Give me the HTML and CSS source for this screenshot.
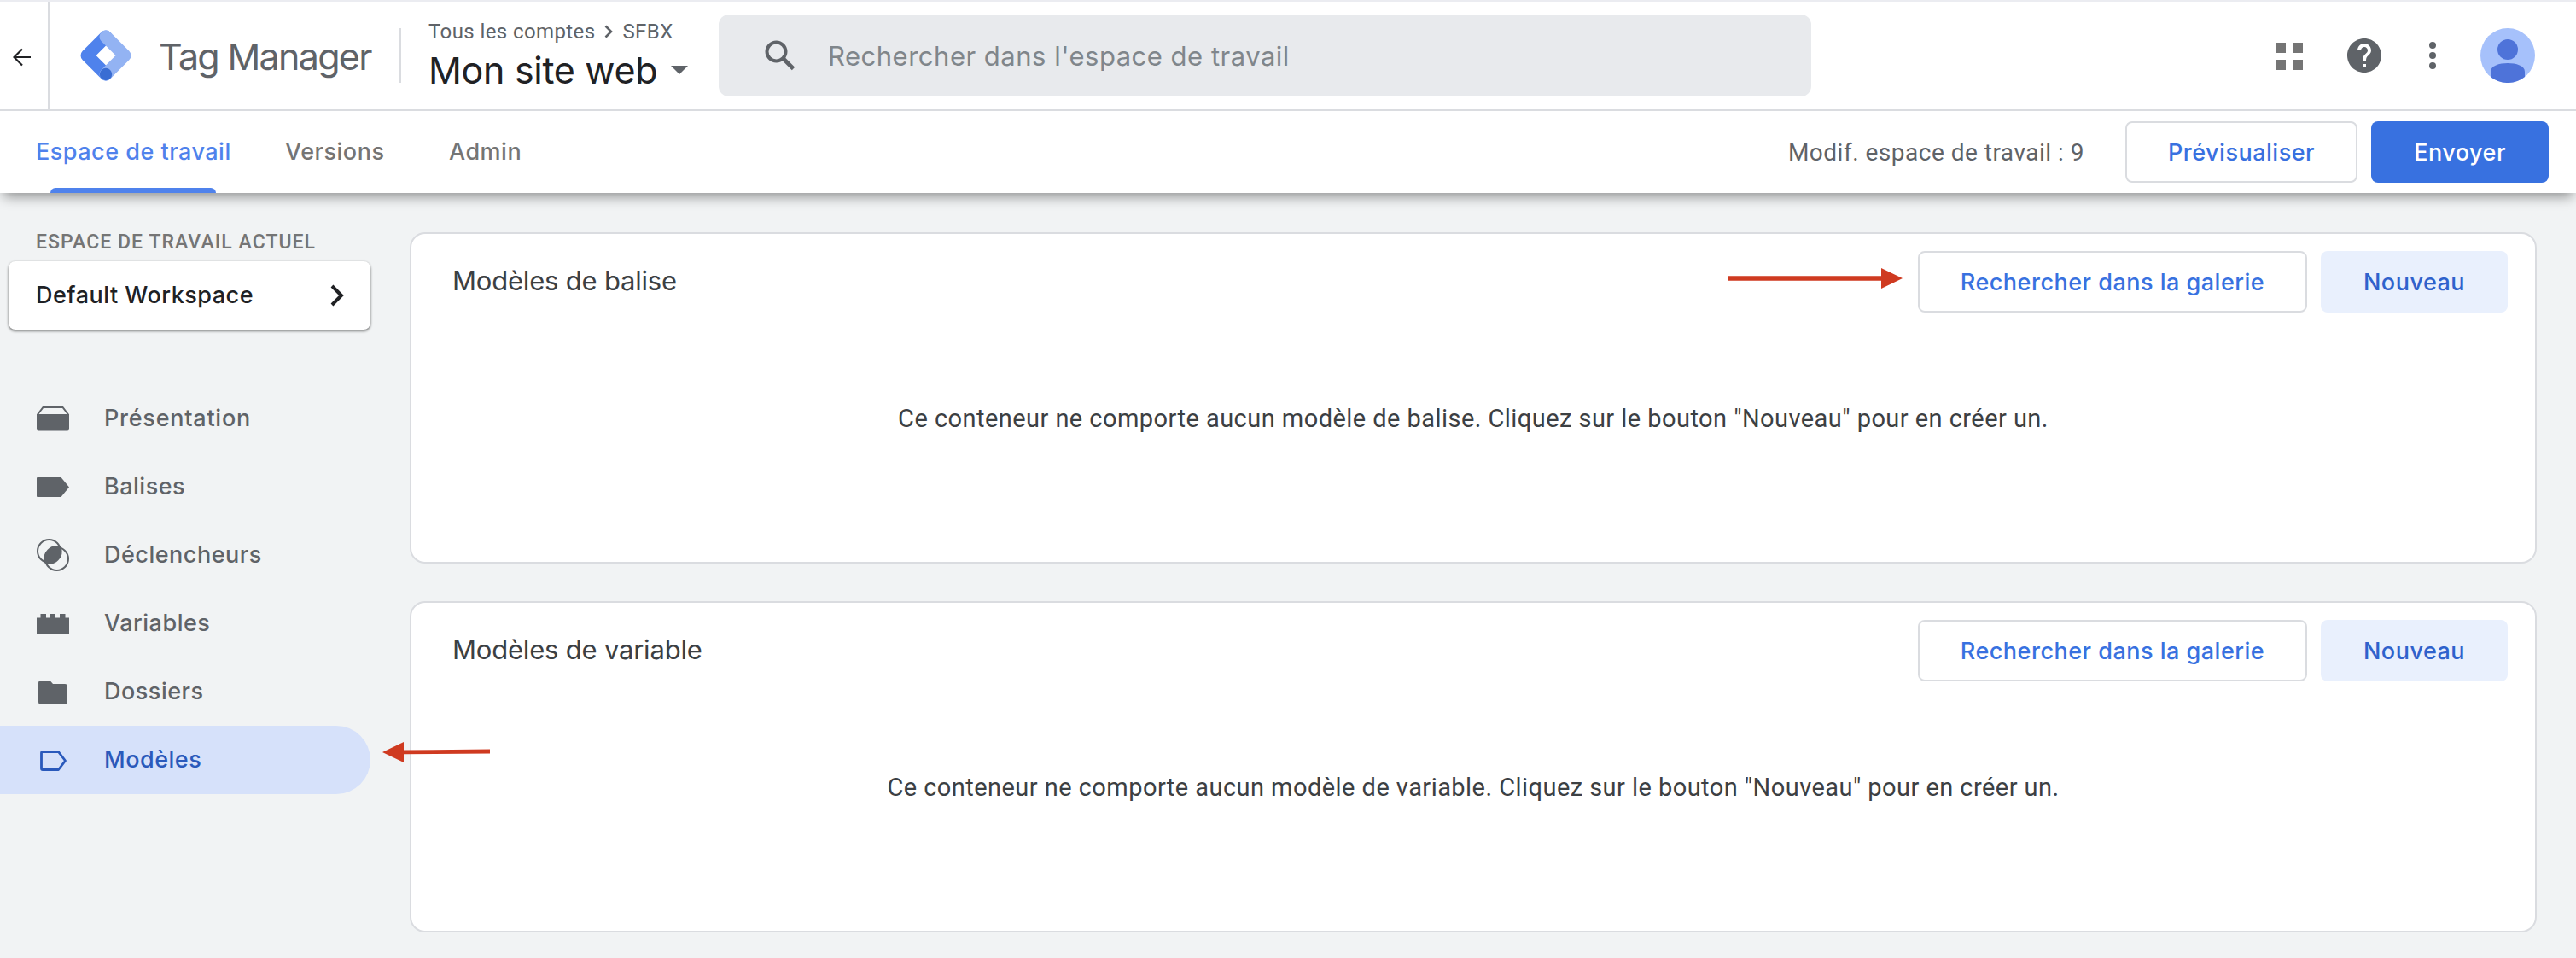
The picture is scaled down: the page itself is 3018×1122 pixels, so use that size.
FILE: index.html
```html
<!DOCTYPE html>
<html lang="fr">
<head>
<meta charset="UTF-8">
<meta name="viewport" content="width=device-width, initial-scale=1.0">
<link rel="stylesheet" href="styles.css">
<title>Tag Manager</title>
</head>
<body>

<header class="topbar">
<button class="back" aria-label="Retour">
<svg width="22" height="22" viewBox="0 0 22 22"><path d="M21 11H2M11 1.500L1.500 11l9.500 9.500" fill="none" stroke="#202124" stroke-width="2.200"/></svg>
</button>

<div class="brand">
<svg class="logo" width="60" height="60" viewBox="0 0 60 60">
<path d="M30 8L8 30l22 22" fill="none" stroke="#4f82ec" stroke-width="15" stroke-linejoin="round" stroke-linecap="round"/>
<path d="M30 8l22 22-22 22" fill="none" stroke="#93b3f3" stroke-width="15" stroke-linejoin="round" stroke-linecap="round"/>
<circle cx="30" cy="52" r="7.200" fill="#3a6dd3"/>
</svg>
<h1 class="brandName">Tag Manager</h1>
</div>

<div class="account">
<div class="crumbs">
<span class="crumbAll">Tous les comptes</span>
<svg width="10" height="16" viewBox="0 0 10 16"><path d="M1.500 1.500L8 8l-6.500 6.500" fill="none" stroke="#5f6368" stroke-width="2.600"/></svg>
<span>SFBX</span>
</div>
<div class="container">
<span class="containerName">Mon site web</span>
<svg width="20" height="10" viewBox="0 0 20 10"><path d="M0 0h20L10 10z" fill="#5f6368"/></svg>
</div>
</div>

<div class="search">
<svg width="36" height="36" viewBox="0 0 36 36"><circle cx="13.500" cy="13.500" r="11" fill="none" stroke="#5f6368" stroke-width="4"/><path d="M21.500 21.500L33.500 33.500" stroke="#5f6368" stroke-width="4.800"/></svg>
<span class="searchText">Rechercher dans l'espace de travail</span>
</div>

<div class="tools">
<svg class="apps" width="32" height="32" viewBox="0 0 32 32" fill="#757575"><path d="M0 0h12v12H0zM20 0h12v12H20zM0 20h12v12H0zM20 20h12v12H20z"/></svg>
<svg class="help" width="40" height="40" viewBox="2 2 20 20"><path fill="#5f6368" d="M12 2C6.480 2 2 6.480 2 12s4.480 10 10 10 10-4.480 10-10S17.520 2 12 2zm1 17h-2v-2h2v2zm2.070-7.750l-.9.920C13.450 12.900 13 13.500 13 15h-2v-.5c0-1.100.450-2.100 1.170-2.830l1.240-1.260c.370-.360.590-.860.590-1.410 0-1.100-.9-2-2-2s-2 .9-2 2H8c0-2.210 1.790-4 4-4s4 1.790 4 4c0 .880-.360 1.680-.930 2.250z"/></svg>
<svg width="8" height="32" viewBox="0 0 8 32" fill="#5f6368"><circle cx="4" cy="4" r="4"/><circle cx="4" cy="16" r="4"/><circle cx="4" cy="28" r="4"/></svg>
<svg class="avatar" width="64" height="64" viewBox="0 0 64 64"><circle cx="32" cy="32" r="32" fill="#a6c1fb"/><circle cx="32" cy="25" r="12" fill="#4e73d9"/><path d="M12 57V51C12 44 22 41 32 41s20 3 20 10v6A32 32 0 0 1 12 57z" fill="#4e73d9"/></svg>
</div>
</header>

<nav class="tabbar">
<a class="tab tabWorkspace active">Espace de travail</a>
<a class="tab tabVersions">Versions</a>
<a class="tab tabAdmin">Admin</a>
<div class="actions">
<span class="changes">Modif. espace de travail : 9</span>
<button class="btns btnPreview">Prévisualiser</button>
<button class="btns btnSubmit">Envoyer</button>
</div>
</nav>

<div class="page">

<aside class="sidebar">
<p class="sideLabel">ESPACE DE TRAVAIL ACTUEL</p>
<button class="workspace">
<span class="workspaceName">Default Workspace</span>
<svg width="16" height="26" viewBox="0 0 16 26"><path d="M2 2l11 11L2 24" fill="none" stroke="#202124" stroke-width="4"/></svg>
</button>

<ul class="menu">
<li class="item">
<svg width="38" height="40" viewBox="0 0 38 40"><path d="M7.500 7h23l6.500 8.500v16.500H1V15.500z" fill="none" stroke="#5f6368" stroke-width="2"/><path d="M0 15h38v17.500a2 2 0 0 1-2 2H2a2 2 0 0 1-2-2z" fill="#5f6368"/></svg>
<span class="itemName wide">Présentation</span>
</li>
<li class="item">
<svg width="38" height="40" viewBox="0 0 38 40"><path d="M1 9h27.500L38 20.500 28.500 32H1a1 1 0 0 1-1-1V10a1 1 0 0 1 1-1z" fill="#5f6368"/></svg>
<span class="itemName">Balises</span>
</li>
<li class="item">
<svg width="38" height="40" viewBox="0 0 38 40"><g fill="none" stroke="#5f6368" stroke-width="2"><circle cx="14.500" cy="15.500" r="13.500"/><circle cx="23.500" cy="24.500" r="13.500"/></g><path d="M28.400 10.500A14.500 14.500 0 0 1 9.500 29.400 14.500 14.500 0 0 1 28.400 10.500z" fill="#5f6368"/></svg>
<span class="itemName">Déclencheurs</span>
</li>
<li class="item">
<svg width="38" height="40" viewBox="0 0 38 40"><path d="M0 13.500h4.500V9h6.500v4.500h5V9h6v4.500h5V9h6.500v4.500H38V32H0z" fill="#5f6368"/></svg>
<span class="itemName">Variables</span>
</li>
<li class="item">
<svg width="38" height="40" viewBox="0 0 38 40"><path d="M5 7h10.500l3.500 4H33a3 3 0 0 1 3 3v18a3 3 0 0 1-3 3H5a3 3 0 0 1-3-3V10a3 3 0 0 1 3-3z" fill="#5f6368"/></svg>
<span class="itemName">Dossiers</span>
</li>
<li class="item selected">
<svg width="38" height="40" viewBox="0 0 38 40"><path d="M7 10.500h18.500L33.500 21 25.500 31.500H7a1.500 1.500 0 0 1-1.500-1.500V12A1.500 1.500 0 0 1 7 10.500z" fill="none" stroke="#2a59bb" stroke-width="2.800" stroke-linejoin="round"/></svg>
<span class="itemName">Modèles</span>
</li>
</ul>
</aside>

<main class="content">
<section class="panel">
<div class="panelHead">
<h2 class="title">Modèles de balise</h2>
<button class="btns btnGallery">Rechercher dans la galerie</button>
<button class="btns btnNew">Nouveau</button>
</div>
<p class="empty">Ce conteneur ne comporte aucun modèle de balise. Cliquez sur le bouton "Nouveau" pour en créer un.</p>
</section>

<section class="panel">
<div class="panelHead">
<h2 class="title">Modèles de variable</h2>
<button class="btns btnGallery">Rechercher dans la galerie</button>
<button class="btns btnNew">Nouveau</button>
</div>
<p class="empty">Ce conteneur ne comporte aucun modèle de variable. Cliquez sur le bouton "Nouveau" pour en créer un.</p>
</section>
</main>

</div>

<!-- red pointers over the page -->
<svg class="pointer pointerGallery" width="204" height="26" viewBox="0 0 204 26"><path d="M0 10.200h179V1l25 12-25 12v-9.200H0z" fill="#cf3a20"/></svg>
<svg class="pointer pointerMenu" width="126" height="26" viewBox="0 0 126 26"><path d="M0 13L25 1v9.500l101-1v5l-101 .8V25z" fill="#cf3a20"/></svg>

</body>
</html>
```
FILE: styles.css
```css
*:before,*,*:after{
margin:0;
padding:0;
box-sizing:border-box;
}

:root{
--line:#dadce0;
--grey:#5f6368;
--blue:#3871e0;
--bg:#f1f3f4;
}

body{
position:relative;
height:1122px;
overflow:hidden;
background:var(--bg);
font-family:Inter, Roboto, sans-serif;
font-size:27px;
font-weight:500;
letter-spacing:.5px;
color:var(--grey);
white-space:nowrap;
}

svg{
display:block;
flex:none;
}

ul{
list-style:none;
}

button{
font:inherit;
letter-spacing:inherit;
color:inherit;
background:none;
border:none;
white-space:nowrap;
}


/* top bar */
.topbar{
position:relative;
z-index:1;
display:flex;
align-items:center;
height:130px;
background:#fff;
border-top:2px solid #ebecf1;
border-bottom:2px solid var(--line);
}

.back{
align-self:stretch;
width:58px;
padding:4px 0 0 15px;
border-right:2px solid var(--line);
}

.brand{
display:flex;
align-items:center;
width:412px;
height:64px;
padding-left:36px;
border-right:2px solid var(--line);
}

.brandName{
margin:2px 0 0 32px;
font-size:43px;
font-weight:400;
letter-spacing:-1.7px;
}

.account{
width:372px;
padding-left:32px;
}

.crumbs{
display:flex;
align-items:center;
gap:11px;
height:34px;
font-family:Roboto, sans-serif;
font-size:24px;
font-weight:400;
letter-spacing:.4px;
}

.container{
display:flex;
align-items:center;
gap:16px;
height:56px;
font-size:43px;
font-weight:400;
letter-spacing:-.3px;
color:#202124;
}

.search{
display:flex;
align-items:center;
width:1280px;
height:96px;
padding-left:54px;
border-radius:12px;
background:#e8eaed;
}

.searchText{
margin-left:38px;
font-size:31px;
font-weight:400;
color:#80868b;
}

.tools{
display:flex;
align-items:center;
margin-left:auto;
padding-right:48px;
}

.apps{
margin-top:2px;
}

.help{
margin:0 56px 0 52px;
}

.avatar{
margin-left:52px;
}


/* tabs */
.tabbar{
position:relative;
display:flex;
align-items:center;
height:96px;
padding:0 32px 0 42px;
background:#fff;
box-shadow:0 8px 14px -4px rgba(0,0,0,.42);
}

.tab{
display:flex;
align-items:center;
height:96px;
padding-bottom:2px;
color:#757575;
}

.tabWorkspace{
width:292px;
}

.tabVersions{
width:192px;
}

.active{
position:relative;
color:#4f82ec;
}

.active:after{
content:"";
position:absolute;
left:17px;
bottom:0;
width:194px;
height:6px;
border-radius:6px 6px 0 0;
background:#4f82ec;
}

.actions{
display:flex;
align-items:center;
margin-left:auto;
}

.changes{
margin-right:48px;
font-family:Roboto, sans-serif;
font-size:28px;
font-weight:400;
}

.btns{
height:72px;
border-radius:8px;
color:var(--blue);
}

.btnPreview{
width:272px;
margin-right:16px;
border:2px solid var(--line);
}

.btnSubmit{
width:208px;
color:#fff;
background:var(--blue);
}


/* sidebar */
.page{
display:flex;
}

.sidebar{
width:480px;
padding-top:43px;
}

.sideLabel{
height:37px;
padding-left:42px;
font-family:Roboto, sans-serif;
font-size:23px;
line-height:30px;
letter-spacing:1.05px;
color:#757575;
}

.workspace{
display:flex;
align-items:center;
justify-content:space-between;
width:424px;
height:80px;
margin-left:10px;
padding:0 31px 0 32px;
border-radius:8px;
background:#fff;
box-shadow:0 2px 3px rgba(0,0,0,.45), 0 0 3px rgba(0,0,0,.15);
color:#202124;
}

.workspaceName{
padding-bottom:2px;
}

.menu{
margin-top:64px;
}

.item{
display:flex;
align-items:center;
gap:41px;
width:434px;
height:80px;
padding-left:43px;
}

.itemName{
padding-bottom:2px;
}

.wide{
letter-spacing:.75px;
}

.selected{
border-radius:0 40px 40px 0;
background:#d6e1fa;
color:#2a59bb;
}


/* template panels */
.content{
padding-top:46px;
}

.panel{
width:2492px;
height:388px;
margin-bottom:44px;
border:2px solid var(--line);
border-radius:18px;
background:#fff;
}

.panelHead{
display:flex;
padding:20px 32px 0 48px;
}

.title{
margin-right:auto;
font-size:31px;
font-weight:400;
line-height:69px;
letter-spacing:-.2px;
color:#3c4043;
}

.btnGallery{
width:456px;
margin-right:16px;
padding-top:1px;
border:2px solid var(--line);
}

.btnNew{
width:219px;
padding-top:1px;
color:#2f62cc;
background:#e9f0fd;
}

.empty{
margin-top:104px;
font-family:Roboto, sans-serif;
font-size:29px;
font-weight:400;
line-height:40px;
letter-spacing:.45px;
text-align:center;
color:#3c4043;
}


.pointer{
position:absolute;
}

.pointerGallery{
left:2025px;
top:313px;
}

.pointerMenu{
left:448px;
top:868px;
}
```
